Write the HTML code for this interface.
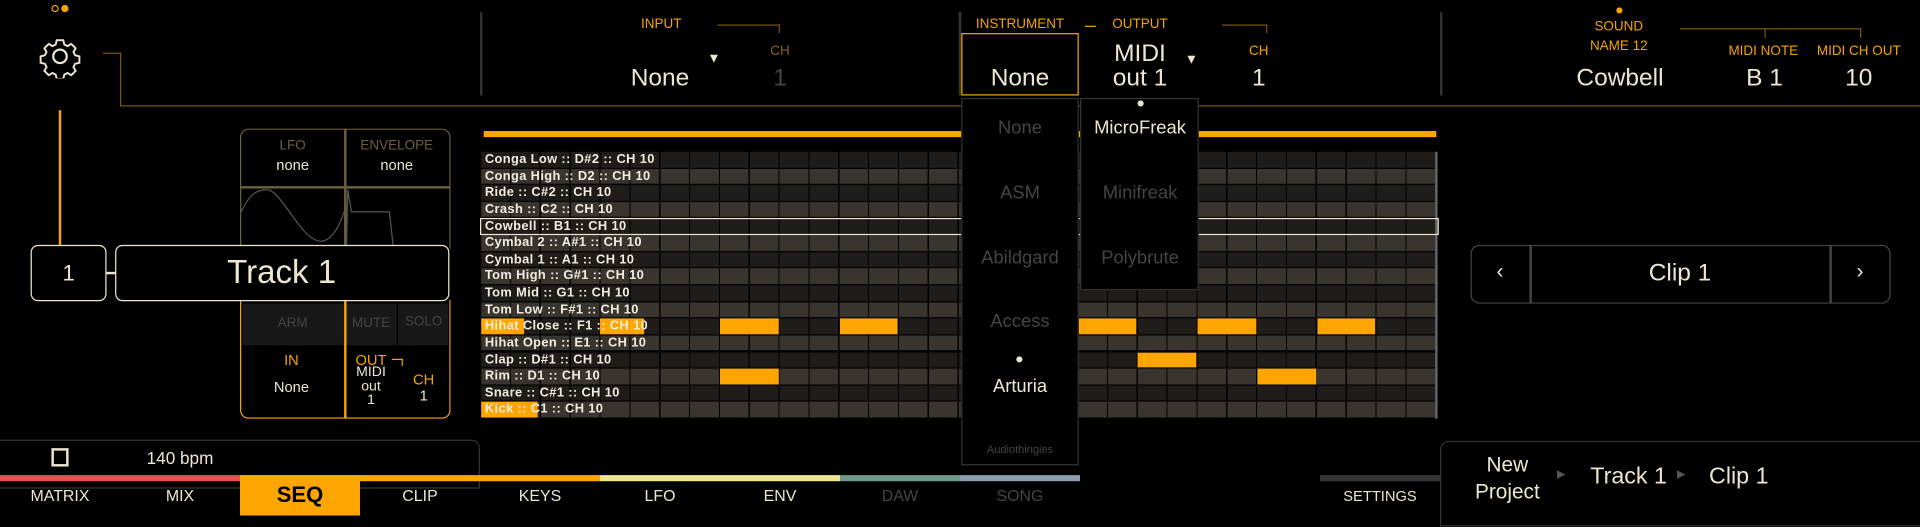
<!DOCTYPE html>
<html><head><meta charset="utf-8"><style>
*{margin:0;padding:0;box-sizing:border-box}
html,body{width:1920px;height:515px;background:#000;overflow:hidden}
#w{position:absolute;left:0;top:0;width:1568px;height:421px;transform:scale(1.22449);transform-origin:0 0;font-family:"Liberation Sans",sans-serif;color:#efe6d2}
.a{position:absolute}
.c{position:absolute;transform:translateX(-50%);white-space:nowrap;text-align:center}
.lab{font-size:11px;color:#f5a300}
.big{font-size:20px;color:#efe6d2}
.row{position:absolute;left:393px;width:780px;height:12.6px}
.d{background:repeating-linear-gradient(90deg,#201c19 0 23.4px,#000 23.4px 24.375px)}
.l{background:repeating-linear-gradient(90deg,#3a342f 0 23.4px,#000 23.4px 24.375px)}
.row span.t{position:absolute;left:3px;top:0;font-size:10.5px;font-weight:bold;line-height:12.6px;color:#f2ece0;letter-spacing:.3px;white-space:nowrap}
.n{position:absolute;top:0;height:12.6px;width:47.8px;background:#ffa500}
.dd{position:absolute;color:#444;font-size:15px}
.tab{position:absolute;top:397px;font-size:13px;transform:translateX(-50%)}
</style></head><body><div id="w">
<div class="a" style="left:42px;top:4px;width:6px;height:6px;border:1.3px solid #f5a300;border-radius:50%"></div>
<div class="a" style="left:50px;top:4px;width:6px;height:6px;background:#f5a300;border-radius:50%"></div>
<svg class="a" style="left:31px;top:28px" width="36" height="36" viewBox="0 0 36 36"><path d="M15 3h6l1 4 3 1.5 3.5-2 4 4-2 3.5 1.5 3 4 1v6l-4 1-1.5 3 2 3.5-4 4-3.5-2-3 1.5-1 4h-6l-1-4-3-1.5-3.5 2-4-4 2-3.5-1.5-3-4-1v-6l4-1 1.5-3-2-3.5 4-4 3.5 2 3-1.5z" fill="none" stroke="#efe6d2" stroke-width="1.8" transform="translate(18 18) scale(.88) translate(-18 -18)"/><circle cx="18" cy="18" r="5.5" fill="none" stroke="#efe6d2" stroke-width="1.8"/></svg>
<div class="a" style="left:48px;top:90px;width:1.5px;height:110px;background:#f5a300"></div>
<div class="a" style="left:84px;top:43px;width:15px;height:44px;border-top:1.5px solid #7a5410;border-right:1.5px solid #7a5410"></div>
<div class="a" style="left:98px;top:85.5px;width:1470px;height:1.5px;background:#7a5410"></div>
<div class="a" style="left:392px;top:10px;width:1.5px;height:68px;background:#333"></div>
<div class="a" style="left:783px;top:10px;width:1.5px;height:68px;background:#333"></div>
<div class="a" style="left:1176px;top:10px;width:1.5px;height:68px;background:#333"></div>
<div class="c lab" style="left:540px;top:14px">INPUT</div>
<div class="a" style="left:586px;top:20px;width:51px;height:7px;border-top:1px solid #7a5410;border-right:1px solid #7a5410"></div>
<div class="c lab" style="left:637px;top:36px;color:#8a6215">CH</div>
<div class="c big" style="left:539px;top:53px">None</div>
<div class="c" style="left:583px;top:42px;font-size:11px">▼</div>
<div class="c big" style="left:637px;top:53px;color:#444">1</div>
<div class="c lab" style="left:833px;top:14px">INSTRUMENT</div>
<div class="a" style="left:886px;top:21px;width:9px;height:1px;background:#f5a300"></div>
<div class="c lab" style="left:931px;top:14px">OUTPUT</div>
<div class="a" style="left:998px;top:20px;width:37px;height:7px;border-top:1px solid #7a5410;border-right:1px solid #7a5410"></div>
<div class="c lab" style="left:1028px;top:36px">CH</div>
<div class="a" style="left:785px;top:27px;width:96px;height:51px;border:1.5px solid #f5a300"></div>
<div class="c big" style="left:833px;top:53px">None</div>
<div class="c big" style="left:931px;top:34px;line-height:20px">MIDI<br>out 1</div>
<div class="c" style="left:973px;top:43px;font-size:11px">▼</div>
<div class="c big" style="left:1028px;top:53px">1</div>
<div class="a" style="left:1320px;top:6px;width:5px;height:5px;background:#f5a300;border-radius:50%"></div>
<div class="c lab" style="left:1322px;top:14px;line-height:16px">SOUND<br>NAME 12</div>
<div class="a" style="left:1372px;top:23px;width:148px;height:1px;background:#7a5410"></div>
<div class="a" style="left:1441px;top:23px;width:1px;height:8px;background:#7a5410"></div>
<div class="a" style="left:1519px;top:23px;width:1px;height:8px;background:#7a5410"></div>
<div class="c lab" style="left:1440px;top:36px">MIDI NOTE</div>
<div class="c lab" style="left:1518px;top:36px">MIDI CH OUT</div>
<div class="c big" style="left:1323px;top:53px">Cowbell</div>
<div class="c big" style="left:1441px;top:53px">B 1</div>
<div class="c big" style="left:1518px;top:53px">10</div>
<div class="a" style="left:395px;top:107px;width:778px;height:5px;background:#ffa500"></div>
<div class="row d" style="top:124px"><span class="t">Conga Low :: D#2 :: CH 10</span></div>
<div class="row l" style="top:137.6px"><span class="t">Conga High :: D2 :: CH 10</span></div>
<div class="row d" style="top:151.2px"><span class="t">Ride :: C#2 :: CH 10</span></div>
<div class="row l" style="top:164.9px"><span class="t">Crash :: C2 :: CH 10</span></div>
<div class="row d" style="top:178.5px"><span class="t">Cowbell :: B1 :: CH 10</span></div>
<div class="row l" style="top:192.1px"><span class="t">Cymbal 2 :: A#1 :: CH 10</span></div>
<div class="row d" style="top:205.7px"><span class="t">Cymbal 1 :: A1 :: CH 10</span></div>
<div class="row l" style="top:219.4px"><span class="t">Tom High :: G#1 :: CH 10</span></div>
<div class="row d" style="top:233px"><span class="t">Tom Mid :: G1 :: CH 10</span></div>
<div class="row l" style="top:246.6px"><span class="t">Tom Low :: F#1 :: CH 10</span></div>
<div class="row d" style="top:260.2px"><div class="n" style="left:195px"></div><div class="n" style="left:292.5px"></div><div class="n" style="left:487.5px"></div><div class="n" style="left:585px"></div><div class="n" style="left:682.5px"></div><div class="a" style="left:0;top:0;width:35px;height:12.6px;background:#ffa500"></div><div class="a" style="left:97px;top:0;width:36px;height:12.6px;background:#ffa500"></div><span class="t">Hihat Close :: F1 :: CH 10</span></div>
<div class="row l" style="top:273.9px"><span class="t">Hihat Open :: E1 :: CH 10</span></div>
<div class="row d" style="top:287.5px"><div class="n" style="left:536.3px"></div><span class="t">Clap :: D#1 :: CH 10</span></div>
<div class="row l" style="top:301.1px"><div class="n" style="left:195px"></div><div class="n" style="left:633.8px"></div><span class="t">Rim :: D1 :: CH 10</span></div>
<div class="row d" style="top:314.7px"><span class="t">Snare :: C#1 :: CH 10</span></div>
<div class="row l" style="top:328.4px"><div class="a" style="left:0;top:0;width:46px;height:12.6px;background:#ffa500"></div><span class="t">Kick :: C1 :: CH 10</span></div>
<div class="a" style="left:1172px;top:124px;width:1.5px;height:218px;background:#666"></div>
<div class="a" style="left:392px;top:178px;width:783px;height:14px;border:1px solid #efe6d2"></div>
<div class="a" style="left:785px;top:80px;width:96px;height:300px;border:1.5px solid #333;background:#000"></div>
<div class="c dd" style="left:833px;top:96px">None</div>
<div class="c dd" style="left:833px;top:149px">ASM</div>
<div class="c dd" style="left:833px;top:202px">Abildgard</div>
<div class="c dd" style="left:833px;top:254px">Access</div>
<div class="a" style="left:830px;top:291px;width:5px;height:5px;background:#efe6d2;border-radius:50%"></div>
<div class="c dd" style="left:833px;top:307px;color:#efe6d2">Arturia</div>
<div class="c dd" style="left:833px;top:362px;font-size:9px">Audiothingies</div>
<div class="a" style="left:882px;top:80px;width:97px;height:157px;border:1.5px solid #333;background:#000"></div>
<div class="a" style="left:929px;top:82px;width:5px;height:5px;background:#efe6d2;border-radius:50%"></div>
<div class="c dd" style="left:931px;top:96px;color:#efe6d2">MicroFreak</div>
<div class="c dd" style="left:931px;top:149px">Minifreak</div>
<div class="c dd" style="left:931px;top:202px">Polybrute</div>
<div class="a" style="left:196px;top:105px;width:172px;height:98px;border:1.5px solid #6b5f3f;border-bottom:none;border-radius:7px 7px 0 0"></div>
<div class="a" style="left:281px;top:105px;width:1.5px;height:95px;background:#6b5f3f"></div>
<div class="a" style="left:196px;top:152px;width:172px;height:1.5px;background:#6b5f3f"></div>
<div class="c" style="left:239px;top:113px;font-size:11px;color:#6b5f3f">LFO</div>
<div class="c" style="left:324px;top:113px;font-size:11px;color:#6b5f3f">ENVELOPE</div>
<div class="c" style="left:239px;top:128px;font-size:12px">none</div>
<div class="c" style="left:324px;top:128px;font-size:12px">none</div>
<svg class="a" style="left:196px;top:152px" width="172" height="50"><path d="M1 21 C8 6 14 3 22 3 C34 3 50 45 66 45 C74 45 80 36 85 21" fill="none" stroke="#555" stroke-width="1"/><path d="M87 48 L88 3 L91 21 L122 21 L125 48" fill="none" stroke="#555" stroke-width="1"/></svg>
<div class="a" style="left:196px;top:245px;width:172px;height:97px;border:1.5px solid #f5a300;border-top:none;border-radius:0 0 7px 7px"></div>
<div class="a" style="left:198px;top:248px;width:84px;height:34px;background:#181818"></div>
<div class="a" style="left:283px;top:248px;width:83px;height:34px;background:#181818"></div>
<div class="a" style="left:324px;top:248px;width:1px;height:34px;background:#000"></div>
<div class="a" style="left:281px;top:245px;width:1.5px;height:96px;background:#f5a300"></div>
<div class="c" style="left:239px;top:258px;font-size:11px;color:#444">ARM</div>
<div class="c" style="left:303px;top:258px;font-size:11px;color:#444">MUTE</div>
<div class="c" style="left:346px;top:257px;font-size:11px;color:#444">SOLO</div>
<div class="c" style="left:238px;top:287px;font-size:12px;color:#f5a300">IN</div>
<div class="c" style="left:238px;top:309px;font-size:12px">None</div>
<div class="c" style="left:303px;top:287px;font-size:12px;color:#f5a300">OUT</div>
<div class="a" style="left:320px;top:293px;width:9px;height:6px;border-top:1px solid #f5a300;border-right:1px solid #f5a300"></div>
<div class="c" style="left:303px;top:299px;font-size:11.5px;line-height:11.5px">MIDI<br>out<br>1</div>
<div class="c" style="left:346px;top:303px;font-size:12px;color:#f5a300">CH</div>
<div class="c" style="left:346px;top:316px;font-size:12px">1</div>
<div class="a" style="left:25px;top:200px;width:62px;height:46px;border:1.5px solid #efe6d2;border-radius:6px"></div>
<div class="c" style="left:56px;top:213px;font-size:18px">1</div>
<div class="a" style="left:87px;top:222px;width:8px;height:1.5px;background:#efe6d2"></div>
<div class="a" style="left:94px;top:200px;width:273px;height:46px;border:1.5px solid #efe6d2;border-radius:6px;background:#000"></div>
<div class="c" style="left:230px;top:207px;font-size:27px">Track 1</div>
<div class="a" style="left:1201px;top:200px;width:343px;height:48px;border:1.5px solid #444;border-radius:7px"></div>
<div class="a" style="left:1249px;top:200px;width:1.5px;height:48px;background:#444"></div>
<div class="a" style="left:1494px;top:200px;width:1.5px;height:48px;background:#444"></div>
<div class="c" style="left:1225px;top:212px;font-size:17px">‹</div>
<div class="c" style="left:1519px;top:212px;font-size:17px">›</div>
<div class="c" style="left:1372px;top:212px;font-size:20px">Clip 1</div>
<div class="a" style="left:-2px;top:359px;width:394px;height:40px;border:1.5px solid #333;border-radius:0 7px 0 0"></div>
<div class="a" style="left:42px;top:366px;width:14px;height:15px;border:2px solid #efe6d2"></div>
<div class="c" style="left:147px;top:366px;font-size:14px">140 bpm</div>
<div class="a" style="left:1176px;top:360px;width:394px;height:70px;border:1.5px solid #333;border-radius:7px 0 0 0;background:#000"></div>
<div class="c" style="left:1231px;top:369px;font-size:17px;line-height:22px">New<br>Project</div>
<div class="c" style="left:1275px;top:382px;font-size:9px;color:#555">▶</div>
<div class="c" style="left:1330px;top:379px;font-size:19px">Track 1</div>
<div class="c" style="left:1373px;top:382px;font-size:9px;color:#555">▶</div>
<div class="c" style="left:1420px;top:379px;font-size:19px">Clip 1</div>
<div class="a" style="left:0;top:388px;width:196px;height:5px;background:#e85050"></div>
<div class="a" style="left:196px;top:388px;width:294px;height:5px;background:#ffa500"></div>
<div class="a" style="left:490px;top:388px;width:196px;height:5px;background:#eee690"></div>
<div class="a" style="left:686px;top:388px;width:98px;height:5px;background:#6d9a8a"></div>
<div class="a" style="left:784px;top:388px;width:98px;height:5px;background:#8a9cb0"></div>
<div class="a" style="left:1078px;top:388px;width:98px;height:5px;background:#333"></div>
<div class="a" style="left:196px;top:388px;width:98px;height:33px;background:#ffa500"></div>
<div class="tab" style="left:49px">MATRIX</div>
<div class="tab" style="left:147px">MIX</div>
<div class="tab" style="left:245px;top:394px;font-size:18px;color:#000;font-weight:bold">SEQ</div>
<div class="tab" style="left:343px">CLIP</div>
<div class="tab" style="left:441px">KEYS</div>
<div class="tab" style="left:539px">LFO</div>
<div class="tab" style="left:637px">ENV</div>
<div class="tab" style="left:735px;color:#444">DAW</div>
<div class="tab" style="left:833px;color:#444">SONG</div>
<div class="tab" style="left:1127px;top:398px;font-size:12px">SETTINGS</div>
</div></body></html>
